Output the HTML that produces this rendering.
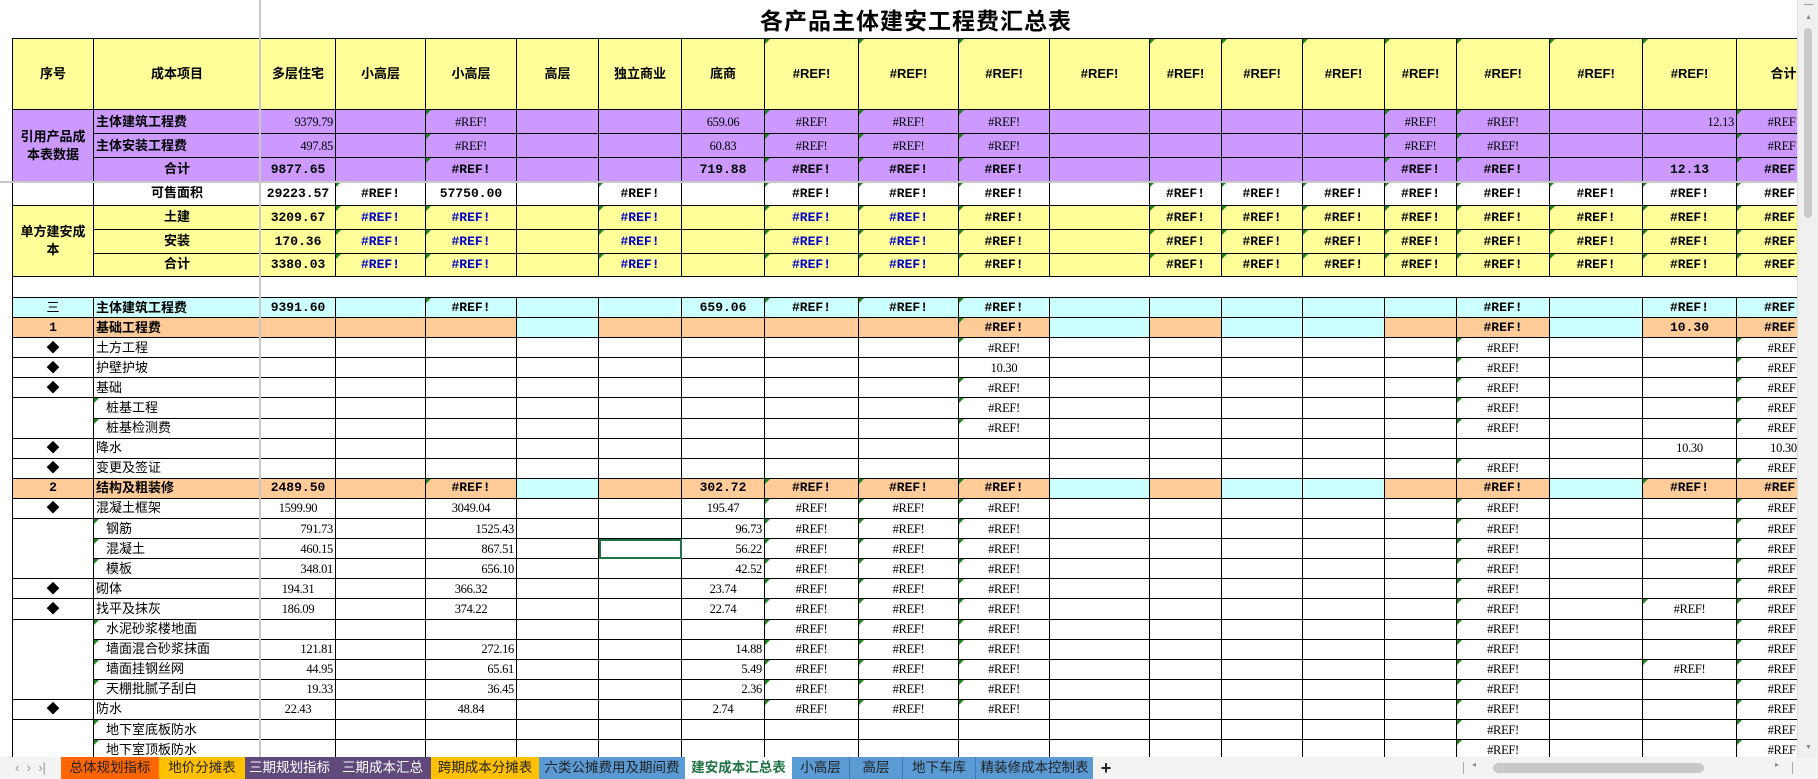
<!DOCTYPE html>
<html><head><meta charset="utf-8"><style>
*{margin:0;padding:0;box-sizing:border-box}
body{width:1818px;height:779px;overflow:hidden;background:#fff;position:relative;font-family:"Liberation Sans","Noto Sans CJK SC",sans-serif}
#title{position:absolute;left:700px;top:2px;width:432px;text-align:center;font:bold 23px "Liberation Serif","Noto Sans CJK SC",serif;color:#000;letter-spacing:1px}
#wrap{position:absolute;left:0;top:0;width:1797px;height:757px;overflow:hidden}
table{position:absolute;left:12px;top:38px;border-collapse:collapse;table-layout:fixed;width:1818px}
td{border:1.5px solid #000;font-size:13px;text-align:center;white-space:nowrap;overflow:hidden;position:relative;padding:0 2px;line-height:16px}
td.h{background:#ffff99;font-weight:bold;font-family:"Liberation Sans","Noto Sans CJK SC",sans-serif}
.p td{background:#cc99ff}
.y td{background:#ffff99}
.cy td{background:#ccffff}
.o td{background:#ffcc99}
.o td.k{background:#ccffff}
.b{font-family:"Liberation Mono","Noto Sans CJK SC",monospace;font-weight:bold;font-size:13px}
.n{font-family:"Liberation Serif","Noto Sans CJK SC",serif;font-size:12.5px;letter-spacing:-0.3px}
.bl{color:#0000cc}
.r{text-align:right}
.l{text-align:left;font-weight:bold}
.t{text-align:left;font-family:"Liberation Sans","Noto Sans CJK SC",sans-serif;font-size:13px}
.i{padding-left:12px}
.g::before{content:"";position:absolute;left:0;top:0;border-top:5px solid #1a8a1a;border-right:5px solid transparent}
.sel{outline:2px solid #217346;outline-offset:-2px}
tr.s td{height:20.1px}
#vline{position:absolute;left:259px;top:0;width:2px;height:757px;background:#c8c8c8}
#hline{position:absolute;left:0;top:181px;width:1797px;height:2px;background:#c8c8c8}
#vs{position:absolute;left:1797px;top:0;width:21px;height:757px;background:#f0f0f0;border-left:1px solid #ddd}
#vs .th{position:absolute;left:6px;top:28px;width:8px;height:190px;background:#c9c9c9;border-radius:4px}
#tabs{position:absolute;left:0;top:757px;width:1818px;height:22px;background:#f3f3f3;font:14px "Liberation Sans","Noto Sans CJK SC",sans-serif}
.tab{position:absolute;top:0;height:22px;line-height:22px;text-align:center;color:#222;font-size:13.5px}
</style></head><body>
<div id="title">各产品主体建安工程费汇总表</div>
<div id="wrap">
<table>
<colgroup><col style="width:81px"><col style="width:167px"><col style="width:75px"><col style="width:90px"><col style="width:91px"><col style="width:82px"><col style="width:83px"><col style="width:83px"><col style="width:94px"><col style="width:100px"><col style="width:91px"><col style="width:100px"><col style="width:72px"><col style="width:81px"><col style="width:82px"><col style="width:72px"><col style="width:93px"><col style="width:93px"><col style="width:94px"><col style="width:94px"></colgroup>
<tr style="height:71px"><td class="h">序号</td><td class="h">成本项目</td><td class="h">多层住宅</td><td class="h">小高层</td><td class="h">小高层</td><td class="h">高层</td><td class="h">独立商业</td><td class="h">底商</td><td class="h b g">#REF!</td><td class="h b g">#REF!</td><td class="h b g">#REF!</td><td class="h b">#REF!</td><td class="h b g">#REF!</td><td class="h b g">#REF!</td><td class="h b g">#REF!</td><td class="h b g">#REF!</td><td class="h b g">#REF!</td><td class="h b g">#REF!</td><td class="h b g">#REF!</td><td class="h">合计</td></tr>
<tr class="p" style="height:24px"><td rowspan="3" style="font-weight:bold;white-space:normal;line-height:18px">引用产品成本表数据</td><td class="t l">主体建筑工程费</td><td class="n r">9379.79</td><td></td><td class="n g">#REF!</td><td></td><td></td><td class="n">659.06</td><td class="n g">#REF!</td><td class="n g">#REF!</td><td class="n g">#REF!</td><td></td><td></td><td></td><td></td><td class="n g">#REF!</td><td class="n g">#REF!</td><td></td><td class="n r">12.13</td><td class="n g">#REF!</td></tr>
<tr class="p" style="height:24px"><td class="t l">主体安装工程费</td><td class="n r">497.85</td><td></td><td class="n g">#REF!</td><td></td><td></td><td class="n">60.83</td><td class="n g">#REF!</td><td class="n g">#REF!</td><td class="n g">#REF!</td><td></td><td></td><td></td><td></td><td class="n g">#REF!</td><td class="n g">#REF!</td><td></td><td></td><td class="n g">#REF!</td></tr>
<tr class="p" style="height:24px"><td class="b">合计</td><td class="b">9877.65</td><td></td><td class="b g">#REF!</td><td></td><td></td><td class="b">719.88</td><td class="b g">#REF!</td><td class="b g">#REF!</td><td class="b g">#REF!</td><td></td><td></td><td></td><td></td><td class="b g">#REF!</td><td class="b g">#REF!</td><td></td><td class="b">12.13</td><td class="b g">#REF!</td></tr>
<tr style="height:24px"><td></td><td class="b">可售面积</td><td class="b">29223.57</td><td class="b g">#REF!</td><td class="b">57750.00</td><td></td><td class="b g">#REF!</td><td></td><td class="b g">#REF!</td><td class="b g">#REF!</td><td class="b g">#REF!</td><td></td><td class="b g">#REF!</td><td class="b g">#REF!</td><td class="b g">#REF!</td><td class="b g">#REF!</td><td class="b g">#REF!</td><td class="b g">#REF!</td><td class="b g">#REF!</td><td class="b g">#REF!</td></tr>
<tr class="y" style="height:24px"><td rowspan="3" style="font-weight:bold;white-space:normal;line-height:18px">单方建安成本</td><td class="b">土建</td><td class="b">3209.67</td><td class="b bl g">#REF!</td><td class="b bl g">#REF!</td><td></td><td class="b bl g">#REF!</td><td></td><td class="b bl g">#REF!</td><td class="b bl g">#REF!</td><td class="b g">#REF!</td><td></td><td class="b g">#REF!</td><td class="b g">#REF!</td><td class="b g">#REF!</td><td class="b g">#REF!</td><td class="b g">#REF!</td><td class="b g">#REF!</td><td class="b g">#REF!</td><td class="b g">#REF!</td></tr>
<tr class="y" style="height:24px"><td class="b">安装</td><td class="b">170.36</td><td class="b bl g">#REF!</td><td class="b bl g">#REF!</td><td></td><td class="b bl g">#REF!</td><td></td><td class="b bl g">#REF!</td><td class="b bl g">#REF!</td><td class="b g">#REF!</td><td></td><td class="b g">#REF!</td><td class="b g">#REF!</td><td class="b g">#REF!</td><td class="b g">#REF!</td><td class="b g">#REF!</td><td class="b g">#REF!</td><td class="b g">#REF!</td><td class="b g">#REF!</td></tr>
<tr class="y" style="height:23px"><td class="b">合计</td><td class="b">3380.03</td><td class="b bl g">#REF!</td><td class="b bl g">#REF!</td><td></td><td class="b bl g">#REF!</td><td></td><td class="b bl g">#REF!</td><td class="b bl g">#REF!</td><td class="b g">#REF!</td><td></td><td class="b g">#REF!</td><td class="b g">#REF!</td><td class="b g">#REF!</td><td class="b g">#REF!</td><td class="b g">#REF!</td><td class="b g">#REF!</td><td class="b g">#REF!</td><td class="b g">#REF!</td></tr>
<tr style="height:21px"><td colspan="20" style="border-left:1.5px solid #000"></td></tr>
<tr class="cy s"><td>三</td><td class="t l">主体建筑工程费</td><td class="b">9391.60</td><td></td><td class="b g">#REF!</td><td></td><td></td><td class="b">659.06</td><td class="b g">#REF!</td><td class="b g">#REF!</td><td class="b g">#REF!</td><td></td><td></td><td></td><td></td><td></td><td class="b">#REF!</td><td></td><td class="b">#REF!</td><td class="b">#REF!</td></tr>
<tr class="o s"><td class="b">1</td><td class="t l">基础工程费</td><td></td><td></td><td></td><td class="k"></td><td></td><td></td><td></td><td></td><td class="b g">#REF!</td><td class="k"></td><td></td><td class="k"></td><td class="k"></td><td></td><td class="b">#REF!</td><td class="k"></td><td class="b">10.30</td><td class="b">#REF!</td></tr>
<tr class="s"><td>◆</td><td class="t">土方工程</td><td></td><td></td><td></td><td></td><td></td><td></td><td></td><td></td><td class="n g">#REF!</td><td></td><td></td><td></td><td></td><td></td><td class="n g">#REF!</td><td></td><td></td><td class="n g">#REF!</td></tr>
<tr class="s"><td>◆</td><td class="t">护壁护坡</td><td></td><td></td><td></td><td></td><td></td><td></td><td></td><td></td><td class="n">10.30</td><td></td><td></td><td></td><td></td><td></td><td class="n g">#REF!</td><td></td><td></td><td class="n g">#REF!</td></tr>
<tr class="s"><td>◆</td><td class="t">基础</td><td></td><td></td><td></td><td></td><td></td><td></td><td></td><td></td><td class="n g">#REF!</td><td></td><td></td><td></td><td></td><td></td><td class="n g">#REF!</td><td></td><td></td><td class="n g">#REF!</td></tr>
<tr class="s"><td rowspan="2"></td><td class="t i g">桩基工程</td><td></td><td></td><td></td><td></td><td></td><td></td><td></td><td></td><td class="n g">#REF!</td><td></td><td></td><td></td><td></td><td></td><td class="n g">#REF!</td><td></td><td></td><td class="n g">#REF!</td></tr>
<tr class="s"><td class="t i g">桩基检测费</td><td></td><td></td><td></td><td></td><td></td><td></td><td></td><td></td><td class="n g">#REF!</td><td></td><td></td><td></td><td></td><td></td><td class="n g">#REF!</td><td></td><td></td><td class="n g">#REF!</td></tr>
<tr class="s"><td>◆</td><td class="t">降水</td><td></td><td></td><td></td><td></td><td></td><td></td><td></td><td></td><td></td><td></td><td></td><td></td><td></td><td></td><td></td><td></td><td class="n">10.30</td><td class="n">10.30</td></tr>
<tr class="s"><td>◆</td><td class="t">变更及签证</td><td></td><td></td><td></td><td></td><td></td><td></td><td></td><td></td><td></td><td></td><td></td><td></td><td></td><td></td><td class="n g">#REF!</td><td></td><td></td><td class="n g">#REF!</td></tr>
<tr class="o s"><td class="b">2</td><td class="t l">结构及粗装修</td><td class="b">2489.50</td><td></td><td class="b g">#REF!</td><td class="k"></td><td></td><td class="b">302.72</td><td class="b g">#REF!</td><td class="b g">#REF!</td><td class="b g">#REF!</td><td class="k"></td><td></td><td class="k"></td><td class="k"></td><td></td><td class="b">#REF!</td><td class="k"></td><td class="b g">#REF!</td><td class="b">#REF!</td></tr>
<tr class="s"><td>◆</td><td class="t">混凝土框架</td><td class="n">1599.90</td><td></td><td class="n">3049.04</td><td></td><td></td><td class="n">195.47</td><td class="n g">#REF!</td><td class="n g">#REF!</td><td class="n g">#REF!</td><td></td><td></td><td></td><td></td><td></td><td class="n g">#REF!</td><td></td><td></td><td class="n g">#REF!</td></tr>
<tr class="s"><td rowspan="3"></td><td class="t i g">钢筋</td><td class="n r">791.73</td><td></td><td class="n r">1525.43</td><td></td><td></td><td class="n r">96.73</td><td class="n g">#REF!</td><td class="n g">#REF!</td><td class="n g">#REF!</td><td></td><td></td><td></td><td></td><td></td><td class="n g">#REF!</td><td></td><td></td><td class="n g">#REF!</td></tr>
<tr class="s"><td class="t i g">混凝土</td><td class="n r">460.15</td><td></td><td class="n r">867.51</td><td></td><td class="sel"></td><td class="n r">56.22</td><td class="n g">#REF!</td><td class="n g">#REF!</td><td class="n g">#REF!</td><td></td><td></td><td></td><td></td><td></td><td class="n g">#REF!</td><td></td><td></td><td class="n g">#REF!</td></tr>
<tr class="s"><td class="t i g">模板</td><td class="n r">348.01</td><td></td><td class="n r">656.10</td><td></td><td></td><td class="n r">42.52</td><td class="n g">#REF!</td><td class="n g">#REF!</td><td class="n g">#REF!</td><td></td><td></td><td></td><td></td><td></td><td class="n g">#REF!</td><td></td><td></td><td class="n g">#REF!</td></tr>
<tr class="s"><td>◆</td><td class="t">砌体</td><td class="n">194.31</td><td></td><td class="n">366.32</td><td></td><td></td><td class="n">23.74</td><td class="n g">#REF!</td><td class="n g">#REF!</td><td class="n g">#REF!</td><td></td><td></td><td></td><td></td><td></td><td class="n g">#REF!</td><td></td><td></td><td class="n g">#REF!</td></tr>
<tr class="s"><td>◆</td><td class="t">找平及抹灰</td><td class="n">186.09</td><td></td><td class="n">374.22</td><td></td><td></td><td class="n">22.74</td><td class="n g">#REF!</td><td class="n g">#REF!</td><td class="n g">#REF!</td><td></td><td></td><td></td><td></td><td></td><td class="n g">#REF!</td><td></td><td class="n g">#REF!</td><td class="n g">#REF!</td></tr>
<tr class="s"><td rowspan="4"></td><td class="t i g">水泥砂浆楼地面</td><td></td><td></td><td></td><td></td><td></td><td></td><td class="n g">#REF!</td><td class="n g">#REF!</td><td class="n g">#REF!</td><td></td><td></td><td></td><td></td><td></td><td class="n g">#REF!</td><td></td><td></td><td class="n g">#REF!</td></tr>
<tr class="s"><td class="t i g">墙面混合砂浆抹面</td><td class="n r">121.81</td><td></td><td class="n r">272.16</td><td></td><td></td><td class="n r">14.88</td><td class="n g">#REF!</td><td class="n g">#REF!</td><td class="n g">#REF!</td><td></td><td></td><td></td><td></td><td></td><td class="n g">#REF!</td><td></td><td></td><td class="n g">#REF!</td></tr>
<tr class="s"><td class="t i g">墙面挂钢丝网</td><td class="n r">44.95</td><td></td><td class="n r">65.61</td><td></td><td></td><td class="n r">5.49</td><td class="n g">#REF!</td><td class="n g">#REF!</td><td class="n g">#REF!</td><td></td><td></td><td></td><td></td><td></td><td class="n g">#REF!</td><td></td><td class="n g">#REF!</td><td class="n g">#REF!</td></tr>
<tr class="s"><td class="t i g">天棚批腻子刮白</td><td class="n r">19.33</td><td></td><td class="n r">36.45</td><td></td><td></td><td class="n r">2.36</td><td class="n g">#REF!</td><td class="n g">#REF!</td><td class="n g">#REF!</td><td></td><td></td><td></td><td></td><td></td><td class="n g">#REF!</td><td></td><td></td><td class="n g">#REF!</td></tr>
<tr class="s"><td>◆</td><td class="t">防水</td><td class="n">22.43</td><td></td><td class="n">48.84</td><td></td><td></td><td class="n">2.74</td><td class="n g">#REF!</td><td class="n g">#REF!</td><td class="n g">#REF!</td><td></td><td></td><td></td><td></td><td></td><td class="n g">#REF!</td><td></td><td></td><td class="n g">#REF!</td></tr>
<tr class="s"><td rowspan="2"></td><td class="t i g">地下室底板防水</td><td></td><td></td><td></td><td></td><td></td><td></td><td></td><td></td><td></td><td></td><td></td><td></td><td></td><td></td><td class="n g">#REF!</td><td></td><td></td><td class="n g">#REF!</td></tr>
<tr class="s"><td class="t i g">地下室顶板防水</td><td></td><td></td><td></td><td></td><td></td><td></td><td></td><td></td><td></td><td></td><td></td><td></td><td></td><td></td><td class="n g">#REF!</td><td></td><td></td><td class="n g">#REF!</td></tr>
</table>
<div id="vline"></div><div id="hline"></div>
</div>
<div id="vs"><div style="position:absolute;left:6px;top:4px;width:9px;height:1px;background:#999"></div><div style="position:absolute;left:7px;top:14px;font-size:7px;color:#888">▲</div><div class="th"></div><div style="position:absolute;left:7px;top:744px;font-size:7px;color:#888">▼</div></div>
<div id="tabs">
<div class="tab" style="left:0;width:61px;color:#999;font-size:13px">‹ &nbsp;› &nbsp;›|</div>
<div class="tab" style="left:61px;width:98px;background:#ff6600">总体规划指标</div>
<div class="tab" style="left:159px;width:86px;background:#ffc000">地价分摊表</div>
<div class="tab" style="left:245px;width:89px;background:#604a7b;color:#fff">三期规划指标</div>
<div class="tab" style="left:334px;width:97px;background:#604a7b;color:#fff">三期成本汇总</div>
<div class="tab" style="left:431px;width:108px;background:#ffc000">跨期成本分摊表</div>
<div class="tab" style="left:539px;width:146px;background:#5b9bd5">六类公摊费用及期间费</div>
<div class="tab" style="left:685px;width:107px;background:#fff;color:#217346;font-weight:bold">建安成本汇总表</div>
<div class="tab" style="left:792px;width:58px;background:#5b9bd5;border-right:1px solid #3b7bb5">小高层</div>
<div class="tab" style="left:850px;width:53px;background:#5b9bd5;border-right:1px solid #3b7bb5">高层</div>
<div class="tab" style="left:903px;width:73px;background:#5b9bd5;border-right:1px solid #3b7bb5">地下车库</div>
<div class="tab" style="left:976px;width:117px;background:#5b9bd5">精装修成本控制表</div>
<div class="tab" style="left:1097px;width:18px;font-size:18px;font-weight:bold">+</div>
<div style="position:absolute;left:1463px;top:5px;width:1px;height:12px;background:#aaa"></div>
<div style="position:absolute;left:1472px;top:3px;font-size:8px;color:#888">◂</div>
<div style="position:absolute;left:1493px;top:6px;width:211px;height:10px;background:#c9c9c9;border-radius:5px"></div>
<div style="position:absolute;left:1775px;top:3px;font-size:8px;color:#888">▸</div>
<div style="position:absolute;left:1792px;top:5px;width:1px;height:12px;background:#aaa"></div>
</div>
</body></html>
